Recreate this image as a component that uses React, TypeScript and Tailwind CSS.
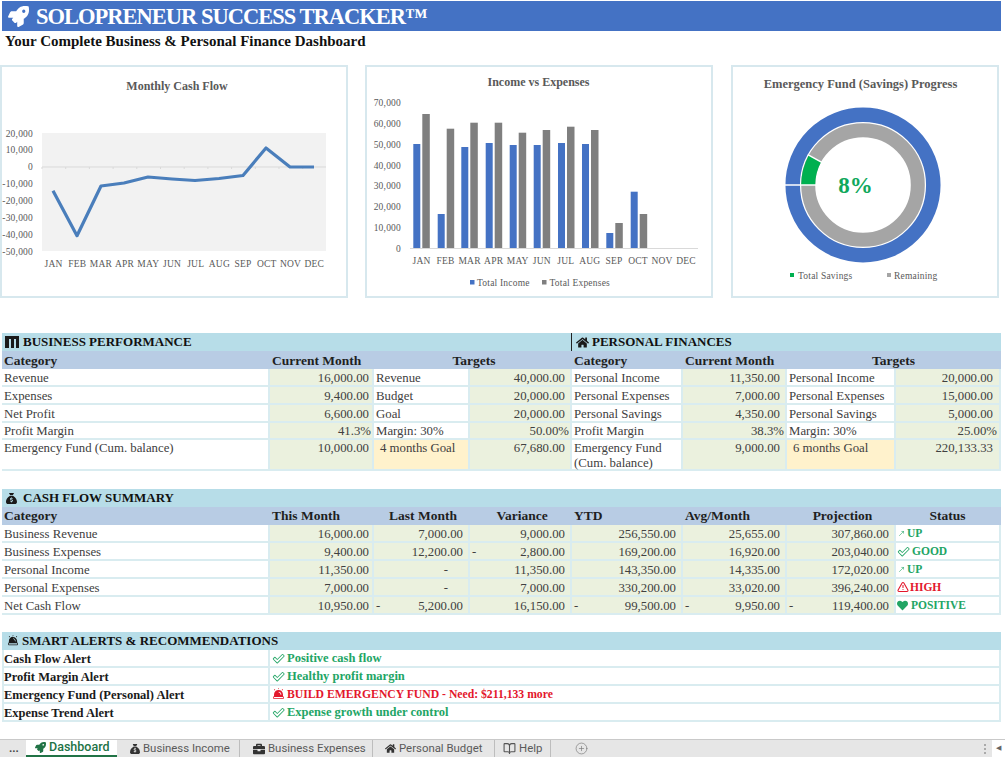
import { CirclePlus, MoveUpRight, TriangleAlert } from "lucide-react";
import { FaBriefcase, FaHeart, FaHome, FaRocket } from "react-icons/fa";
import { FaSackDollar } from "react-icons/fa6";
import { LuBookOpen } from "react-icons/lu";
import { PiCheckFat, PiSirenFill } from "react-icons/pi";

const months = ["JAN", "FEB", "MAR", "APR", "MAY", "JUN", "JUL", "AUG", "SEP", "OCT", "NOV", "DEC"];

const cashPoints = "53,190.7 77,235.7 101,186 124,183 148,177 172,179 195,180.5 219,178.5 243,175.5 266,148 290,167 314,167";

const bars = [
  [413.3, 144, 114],
  [437.7, 214, 128.7],
  [461.3, 147, 122.7],
  [485.7, 143, 122.7],
  [509.7, 145, 132.7],
  [533.7, 145, 130],
  [558, 143, 126.7],
  [582, 144, 130],
  [606.3, 233, 223],
  [630.7, 191.7, 214],
];

const gridClass = "grid grid-cols-[268px_104px_96px_102px_111px_104px_109px_105px]";

function ChartCard({ className, viewBox, width, children }: { className: string; viewBox: string; width: number; children: React.ReactNode }) {
  return (
    <div className={`h-[233px] shrink-0 border-2 border-[#d7e8ee] bg-white ${className}`}>
      <svg viewBox={viewBox} width={width} height={229} className="block">
        {children}
      </svg>
    </div>
  );
}

function CashFlowChart() {
  return (
    <ChartCard className="w-[348px]" viewBox="2 67 344 229" width={344}>
      <text x="177" y="90" textAnchor="middle" className="fill-[#595959] text-[12px] font-bold">Monthly Cash Flow</text>
      <rect x="42" y="133" width="284" height="118" fill="#f2f2f2" />
      <line x1="42" y1="167" x2="326" y2="167" stroke="#d9d9d9" strokeWidth="1" />
      {months.map((_, i) => (
        <line key={i} x1={42 + i * 23.7} y1="167" x2={42 + i * 23.7} y2="169" stroke="#d9d9d9" />
      ))}
      {["20,000", "10,000", "0", "-10,000", "-20,000", "-30,000", "-40,000", "-50,000"].map((t, i) => (
        <text key={t} x="33" y={136.5 + i * 16.9} textAnchor="end" className="fill-[#595959] text-[9.5px] tracking-[0.2px]">{t}</text>
      ))}
      {months.map((m, i) => (
        <text key={m} x={53.5 + i * 23.7} y="267" textAnchor="middle" className="fill-[#595959] text-[9.5px] tracking-[0.2px]">{m}</text>
      ))}
      <polyline points={cashPoints} fill="none" stroke="#4a7ebb" strokeWidth="3.2" strokeLinejoin="round" />
    </ChartCard>
  );
}

function IncomeChart() {
  return (
    <ChartCard className="w-[348px]" viewBox="367 67 344 229" width={344}>
      <text x="538.5" y="85.5" textAnchor="middle" className="fill-[#595959] text-[12px] font-bold">Income vs Expenses</text>
      {["70,000", "60,000", "50,000", "40,000", "30,000", "20,000", "10,000", "0"].map((t, i) => (
        <text key={t} x="401" y={106 + i * 20.85} textAnchor="end" className="fill-[#595959] text-[9.5px] tracking-[0.2px]">{t}</text>
      ))}
      <line x1="410" y1="248.5" x2="698" y2="248.5" stroke="#d9d9d9" />
      {bars.map(([x, blue, gray]) => (
        <g key={x}>
          <rect x={x} y={blue} width="7" height={248 - blue} fill="#4472c4" />
          <rect x={x + 9} y={gray} width="7.5" height={248 - gray} fill="#7f7f7f" />
        </g>
      ))}
      {months.map((m, i) => (
        <text key={m} x={421.5 + i * 24.05} y="264" textAnchor="middle" className="fill-[#595959] text-[9.5px] tracking-[0.2px]">{m}</text>
      ))}
      <rect x="470" y="280" width="4.5" height="4.5" fill="#4472c4" />
      <text x="477" y="286" className="fill-[#595959] text-[9.5px] tracking-[0.2px]">Total Income</text>
      <rect x="542" y="280" width="4.5" height="4.5" fill="#7f7f7f" />
      <text x="549.5" y="286" className="fill-[#595959] text-[9.5px] tracking-[0.2px]">Total Expenses</text>
    </ChartCard>
  );
}

function FundChart() {
  return (
    <ChartCard className="w-[268px]" viewBox="733 67 264 229" width={264}>
      <text x="860.5" y="88" textAnchor="middle" className="fill-[#595959] text-[12.5px] font-bold">Emergency Fund (Savings) Progress</text>
      <circle cx="863" cy="185" r="70.3" fill="none" stroke="#4472c4" strokeWidth="14.5" />
      <circle cx="863" cy="185" r="54.8" fill="none" stroke="#a5a5a5" strokeWidth="14" />
      <circle cx="863" cy="185" r="54.8" fill="none" stroke="#00b050" strokeWidth="14" strokeDasharray="27.5 317" transform="rotate(180 863 185)" />
      <line x1="784" y1="185" x2="816" y2="185" stroke="#fff" strokeWidth="1.5" />
      <line x1="821.8" y1="162.3" x2="807.8" y2="154.6" stroke="#fff" strokeWidth="1.5" />
      <text x="855.5" y="193" textAnchor="middle" className="fill-[#10a85c] text-[23px] font-bold">8%</text>
      <rect x="790" y="273" width="4" height="4" fill="#00b050" />
      <text x="798" y="279" className="fill-[#595959] text-[9.5px] tracking-[0.2px]">Total Savings</text>
      <rect x="887" y="273" width="4" height="4" fill="#a5a5a5" />
      <text x="894" y="279" className="fill-[#595959] text-[9.5px] tracking-[0.2px]">Remaining</text>
    </ChartCard>
  );
}

function Label({ children, className = "" }: { children: React.ReactNode; className?: string }) {
  return <div className={`border-b-2 border-r-2 border-[#d9ecf0] bg-white pl-[2px] text-[#404040] ${className}`}>{children}</div>;
}

function Value({ children, dash, className = "" }: { children: React.ReactNode; dash?: boolean; className?: string }) {
  return (
    <div className={`flex justify-between border-b-2 border-r-2 border-[#d9ecf0] bg-[#ebf1de] pl-[2px] text-[#404040] ${className}`}>
      <span>{dash ? "-" : ""}</span>
      <span>{children}</span>
    </div>
  );
}

function Head({ children, className = "" }: { children: React.ReactNode; className?: string }) {
  return <div className={`h-[18px] bg-[#b8cce4] pl-[2px] text-[13.5px] font-bold text-[#1f1f1f] ${className}`}>{children}</div>;
}

function SectionBar({ children, className = "" }: { children: React.ReactNode; className?: string }) {
  return <div className={`flex h-[18px] items-center text-[13px] font-bold leading-[18px] text-[#111] ${className}`}>{children}</div>;
}

const perfRows = [
  ["Revenue", "16,000.00", "Revenue", "40,000.00", "Personal Income", "11,350.00", "Personal Income", "20,000.00"],
  ["Expenses", "9,400.00", "Budget", "20,000.00", "Personal Expenses", "7,000.00", "Personal Expenses", "15,000.00"],
  ["Net Profit", "6,600.00", "Goal", "20,000.00", "Personal Savings", "4,350.00", "Personal Savings", "5,000.00"],
];

function Performance() {
  return (
    <div className="w-[999px] text-[12.8px]">
      <div className="grid h-[18px] grid-cols-[569px_430px] bg-[#b7dde8]">
        <SectionBar className="gap-[4px] pl-[3px]">
          <svg viewBox="0 0 14 12" width="14" height="12">
            <path d="M0 0h14v12h-3V3H9v9H6V3H4v9H0z" fill="#1a1a1a" />
          </svg>
          BUSINESS PERFORMANCE
        </SectionBar>
        <SectionBar className="gap-[3px] border-l border-[#222] pl-[4px]">
          <FaHome size={13} color="#1a1a1a" />
          PERSONAL FINANCES
        </SectionBar>
      </div>
      <div className={gridClass}>
        <Head className="leading-[20px]">Category</Head>
        <Head className="leading-[20px]">Current Month</Head>
        <Head className="col-span-2 text-center leading-[20px]">Targets</Head>
        <Head className="leading-[20px]">Category</Head>
        <Head className="leading-[20px]">Current Month</Head>
        <Head className="col-span-2 pr-[3px] text-center leading-[20px]">Targets</Head>
        {perfRows.map((row) =>
          row.map((cell, i) =>
            i % 2 === 0 ? (
              <Label key={row[0] + i} className="h-[18px] leading-[19px]">{cell}</Label>
            ) : (
              <Value key={row[0] + i} className={`h-[18px] leading-[19px] ${i === 1 ? "pr-[3px]" : i === 7 ? "pr-[6px]" : "pr-[5px]"}`}>{cell}</Value>
            ),
          ),
        )}
        <Label className="h-[17px] leading-[17px]">Profit Margin</Label>
        <Value className="h-[17px] pr-[1px] leading-[17px]">41.3%</Value>
        <Label className="h-[17px] leading-[17px]">Margin: 30%</Label>
        <Value className="h-[17px] pr-[1px] leading-[17px]">50.00%</Value>
        <Label className="h-[17px] leading-[17px]">Profit Margin</Label>
        <Value className="h-[17px] pr-[1px] leading-[17px]">38.3%</Value>
        <Label className="h-[17px] leading-[17px]">Margin: 30%</Label>
        <Value className="h-[17px] pr-[2px] leading-[17px]">25.00%</Value>
        <Label className="h-[31px] pt-px leading-[15px]">Emergency Fund (Cum. balance)</Label>
        <Value className="h-[31px] pr-[3px] pt-px leading-[15px]">10,000.00</Value>
        <Label className="h-[31px] !bg-[#fff2cc] pl-[6px] pt-px leading-[15px]">4 months Goal</Label>
        <Value className="h-[31px] pr-[5px] pt-px leading-[15px]">67,680.00</Value>
        <Label className="h-[31px] pt-px leading-[14.5px]">Emergency Fund<br />(Cum. balance)</Label>
        <Value className="h-[31px] pr-[5px] pt-px leading-[15px]">9,000.00</Value>
        <Label className="h-[31px] !bg-[#fff2cc] pl-[6px] pt-px leading-[15px]">6 months Goal</Label>
        <Value className="h-[31px] pr-[6px] pt-px leading-[15px]">220,133.33</Value>
      </div>
    </div>
  );
}

const upStatus = (
  <span className="flex items-center gap-[2px] font-bold text-[#22a565]">
    <MoveUpRight size={7} strokeWidth={2} className="ml-[1px]" />
    UP
  </span>
);

const cashRows: { name: string; cells: [string, boolean][]; status: React.ReactNode }[] = [
  {
    name: "Business Revenue",
    cells: [["16,000.00", false], ["7,000.00", false], ["9,000.00", false], ["256,550.00", false], ["25,655.00", false], ["307,860.00", false]],
    status: upStatus,
  },
  {
    name: "Business Expenses",
    cells: [["9,400.00", false], ["12,200.00", false], ["2,800.00", true], ["169,200.00", false], ["16,920.00", false], ["203,040.00", false]],
    status: (
      <span className="flex items-center gap-[2px] font-bold text-[#22a565]">
        <PiCheckFat size={13} />
        GOOD
      </span>
    ),
  },
  {
    name: "Personal Income",
    cells: [["11,350.00", false], ["- ", false], ["11,350.00", false], ["143,350.00", false], ["14,335.00", false], ["172,020.00", false]],
    status: upStatus,
  },
  {
    name: "Personal Expenses",
    cells: [["7,000.00", false], ["- ", false], ["7,000.00", false], ["330,200.00", false], ["33,020.00", false], ["396,240.00", false]],
    status: (
      <span className="flex items-center gap-[1px] font-bold text-[#e3172c]">
        <TriangleAlert size={12} strokeWidth={2.2} />
        HIGH
      </span>
    ),
  },
  {
    name: "Net Cash Flow",
    cells: [["10,950.00", false], ["5,200.00", true], ["16,150.00", false], ["99,500.00", true], ["9,950.00", true], ["119,400.00", true]],
    status: (
      <span className="flex items-center gap-[3px] font-bold text-[#22a565]">
        <FaHeart size={11} />
        POSITIVE
      </span>
    ),
  },
];

function CashFlow() {
  return (
    <div className="mt-[18px] w-[999px] text-[12.8px]">
      <SectionBar className="gap-[6px] bg-[#b7dde8] pl-[4px]">
        <FaSackDollar size={11} color="#1a1a1a" />
        CASH FLOW SUMMARY
      </SectionBar>
      <div className={gridClass}>
        <Head className="leading-[18px]">Category</Head>
        <Head className="leading-[18px]">This Month</Head>
        <Head className="text-center leading-[18px]">Last Month</Head>
        <Head className="text-center leading-[18px]">Variance</Head>
        <Head className="leading-[18px]">YTD</Head>
        <Head className="leading-[18px]">Avg/Month</Head>
        <Head className="text-center leading-[18px]">Projection</Head>
        <Head className="pr-[4px] text-center leading-[18px]">Status</Head>
        {cashRows.map((row) => (
          <div key={row.name} className="contents">
            <Label className="h-[18px] leading-[19px]">{row.name}</Label>
            {row.cells.map(([text, dash], i) => (
              <Value key={i} dash={dash} className={`h-[18px] leading-[19px] ${text === "- " ? "pr-[20px]" : i === 0 ? "pr-[3px]" : "pr-[5px]"}`}>
                {text}
              </Value>
            ))}
            <div className="flex h-[18px] items-center border-b-2 border-r-2 border-[#d9ecf0] bg-white pl-[1px] text-[11.5px] leading-[17px]">{row.status}</div>
          </div>
        ))}
      </div>
    </div>
  );
}

const alertRows = [
  { name: "Cash Flow Alert", text: "Positive cash flow", bad: false },
  { name: "Profit Margin Alert", text: "Healthy profit margin", bad: false },
  { name: "Emergency Fund (Personal) Alert", text: "BUILD EMERGENCY FUND - Need: $211,133 more", bad: true },
  { name: "Expense Trend Alert", text: "Expense growth under control", bad: false },
];

function Alerts() {
  return (
    <div className="mt-[17px] w-[999px] text-[12.5px]">
      <SectionBar className="gap-[3px] bg-[#b7dde8] pl-[5px]">
        <PiSirenFill size={12} color="#1a1a1a" />
        SMART ALERTS &amp; RECOMMENDATIONS
      </SectionBar>
      <div className="grid grid-cols-[266px_731px] border-l-2 border-[#d9ecf0]">
        {alertRows.map((row) => (
          <div key={row.name} className="contents">
            <div className="h-[18px] border-b-2 border-r-2 border-[#d9ecf0] bg-white font-bold leading-[19px] text-[#1a1a1a]">{row.name}</div>
            <div className={`flex h-[18px] items-center gap-[2px] border-b-2 border-r-2 border-[#d9ecf0] bg-white pl-[2px] pt-px font-bold leading-[17px] ${row.bad ? "text-[11.7px] text-[#e3172c]" : "text-[#22a565]"}`}>
              {row.bad ? <PiSirenFill size={13} /> : <PiCheckFat size={13} />}
              {row.text}
            </div>
          </div>
        ))}
      </div>
    </div>
  );
}

function SheetTab({ icon, label, className = "" }: { icon: React.ReactNode; label: string; className?: string }) {
  return (
    <div className={`flex h-full items-center gap-[3px] whitespace-nowrap border-r border-[#bdbdbd] text-[#5a5a5a] ${className}`}>
      {icon}
      {label}
    </div>
  );
}

function SheetTabs() {
  return (
    <div className="mt-auto flex h-[18px] items-center border-t border-[#c9c9c9] bg-[#e6e6e6] font-['Roboto',sans-serif] text-[11.4px]">
      <div className="w-[26px] pl-[9px] font-bold leading-none text-[#444]">...</div>
      <div className="flex h-full w-[91px] items-center gap-[3px] border-b-2 border-[#217346] bg-white pl-[9px] text-[12.5px] font-medium text-[#217346]">
        <FaRocket size={11} />
        Dashboard
      </div>
      <SheetTab className="w-[123px] pl-[13px]" icon={<FaSackDollar size={10} color="#333" />} label="Business Income" />
      <SheetTab className="w-[133px] pl-[13px]" icon={<FaBriefcase size={12} color="#333" />} label="Business Expenses" />
      <SheetTab className="w-[122px] pl-[12px]" icon={<FaHome size={11} color="#333" />} label="Personal Budget" />
      <SheetTab className="w-[56px] pl-[8px]" icon={<LuBookOpen size={13} color="#555" />} label="Help" />
      <CirclePlus size={13} strokeWidth={1.2} color="#777" className="ml-[24px]" />
      <div className="ml-auto mr-[6px] flex flex-col gap-[2px]">
        <span className="h-[2px] w-[2px] bg-[#aaa]" />
        <span className="h-[2px] w-[2px] bg-[#aaa]" />
        <span className="h-[2px] w-[2px] bg-[#aaa]" />
      </div>
      <div className="flex h-full w-[13px] items-center justify-center bg-white text-[7px] text-[#666]">◀</div>
    </div>
  );
}

export default function App() {
  return (
    <div className="flex h-[757px] w-[1005px] flex-col overflow-hidden bg-white font-['Liberation_Serif',serif]">
      <div className="ml-[2px] mt-px flex h-[30px] w-[999px] items-center gap-[7px] bg-[#4472c4] pl-[6px] text-[22.5px] font-bold leading-none tracking-[-1px] text-white">
        <FaRocket size={21} />
        <span className="pt-[3px]">SOLOPRENEUR SUCCESS TRACKER™</span>
      </div>
      <div className="h-[19px] pl-[5px] text-[15px] font-bold leading-[20px] text-[#111]">Your Complete Business &amp; Personal Finance Dashboard</div>
      <div className="mt-[15px] flex">
        <CashFlowChart />
        <div className="ml-[17px]">
          <IncomeChart />
        </div>
        <div className="ml-[18px]">
          <FundChart />
        </div>
      </div>
      <div className="ml-[2px] mt-[35px]">
        <Performance />
        <CashFlow />
        <Alerts />
      </div>
      <SheetTabs />
    </div>
  );
}
